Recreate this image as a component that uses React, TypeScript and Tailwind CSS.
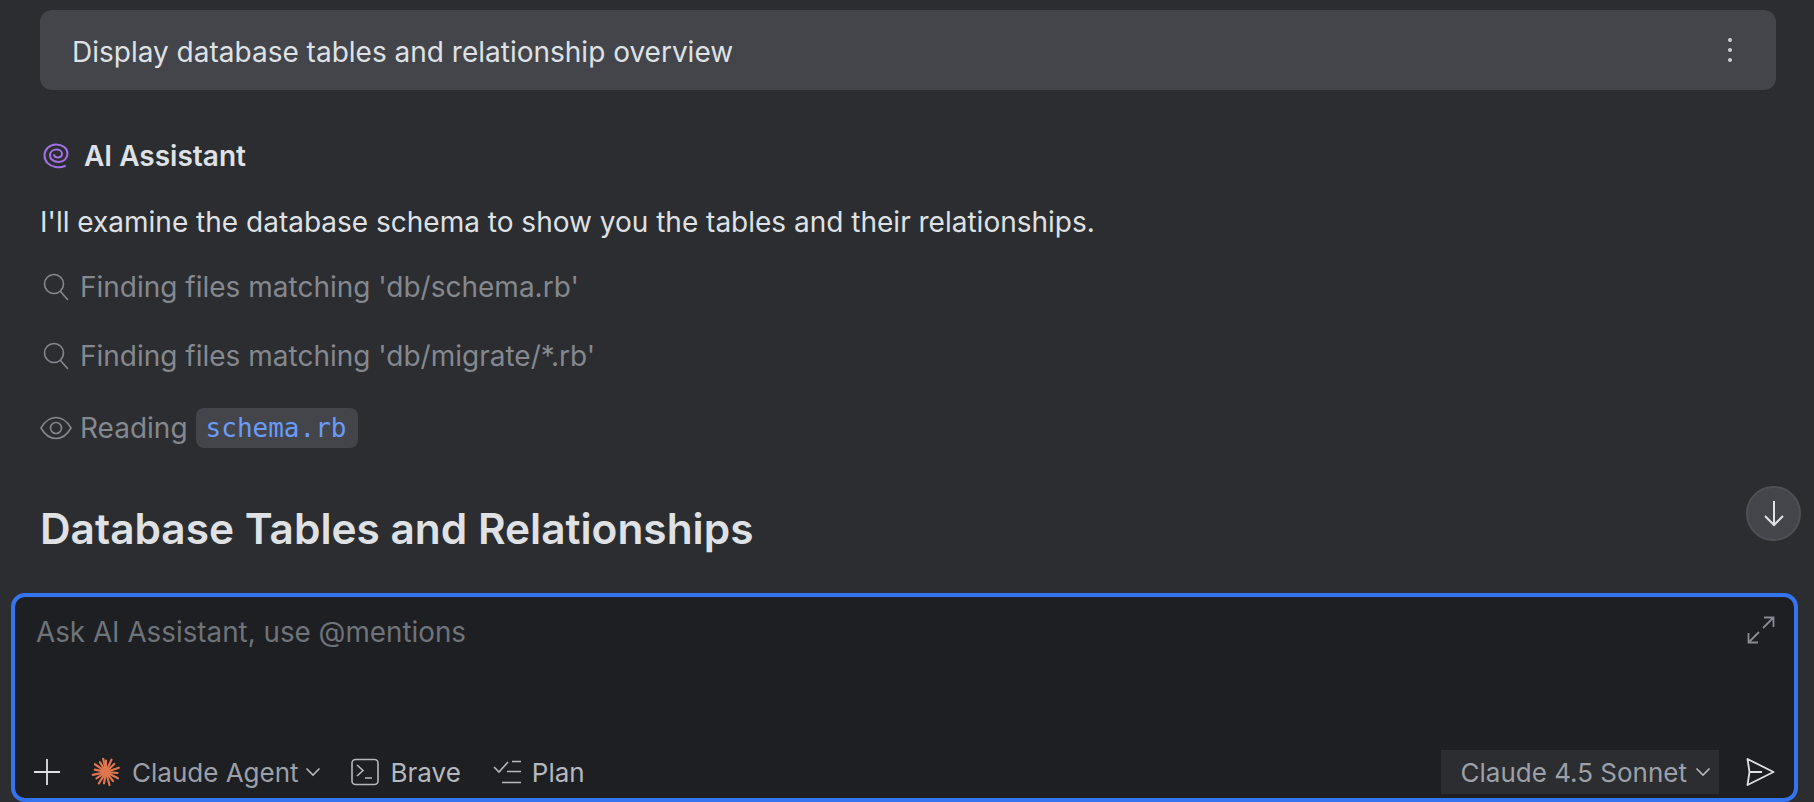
const font = "font-['Inter',sans-serif]"

function Spiral() {
  return (
    <svg width="26" height="26" viewBox="0 0 26 26" fill="none" stroke="#a571e6" strokeWidth="2" strokeLinecap="round">
      <path d="M22 23c-3 1.300-6.500 1.500-9.500 1C6 23 1.500 18.500 1.500 12.500 1.500 6.500 6.500 1.500 13 1.500c6.500 0 11.500 3.500 11.500 9 0 5-3.800 8.500-9 8.500C11 19 7 16.300 7 12.500 7 9 9.800 6.500 13.500 6.500c3 0 5.500 1.700 5.500 4.300 0 2.400-2 3.700-4.200 3.700-1.800 0-3.300-.9-3.800-2.500" />
    </svg>
  )
}

function Search() {
  return (
    <svg width="26" height="28" viewBox="0 0 26 28" fill="none" stroke="#85888f" strokeWidth="1.600" strokeLinecap="round">
      <circle cx="11" cy="11" r="9.500" />
      <path d="M17.500 18.500l7 8" />
    </svg>
  )
}

function Eye() {
  return (
    <svg width="32" height="24" viewBox="0 0 32 24" fill="none" stroke="#85888f" strokeWidth="1.600">
      <path d="M1 12C5 5 10 1.500 16 1.500S27 5 31 12c-4 7-9 10.500-15 10.500S5 19 1 12z" strokeLinejoin="round" />
      <circle cx="16" cy="12" r="5.500" />
    </svg>
  )
}

function Chevron({ color }: { color: string }) {
  return (
    <svg width="16" height="10" viewBox="0 0 16 10" fill="none" stroke={color} strokeWidth="1.600">
      <path d="M1.500 1.500L8 8l6.500-6.500" />
    </svg>
  )
}

function Burst() {
  const rays = [0, 24, 46, 72, 95, 118, 142, 165, 190, 212, 236, 258, 282, 305, 328, 348]
  return (
    <svg width="30" height="30" viewBox="0 0 30 30" stroke="#e0774f" strokeWidth="2.200" strokeLinecap="round">
      {rays.map((r, i) => (
        <line key={r} x1="15" y1="14" x2="15" y2={i % 2 ? 1.500 : 3.500} transform={`rotate(${r} 15 15)`} />
      ))}
    </svg>
  )
}

export default function App() {
  return (
    <div className={`${font} flex h-[802px] w-[1814px] flex-col overflow-hidden bg-[#2b2d30] text-[#dfe1e5]`}>
      <main className="relative flex min-h-0 flex-1 flex-col pl-10 pr-[38px] pt-[10px]">
        <div className="flex h-20 shrink-0 items-center justify-between rounded-xl bg-[#43454a] pl-8 pr-[44px]">
          <span className="pt-[3px] text-[28px]">Display database tables and relationship overview</span>
          <div className="flex flex-col gap-[6px]">
            <span className="size-1 rounded-full bg-[#ced0d6]" />
            <span className="size-1 rounded-full bg-[#ced0d6]" />
            <span className="size-1 rounded-full bg-[#ced0d6]" />
          </div>
        </div>

        <div className="mt-[48px] flex h-9 items-center gap-[15px] pl-[3px]">
          <Spiral />
          <span className="text-[28px] font-semibold">AI Assistant</span>
        </div>

        <p className="mt-[30px] h-9 text-[28px] leading-9">
          I'll examine the database schema to show you the tables and their relationships.
        </p>

        <div className="mt-[29px] flex h-9 items-center gap-[11px] pl-[3px] text-[28px] text-[#85888f]">
          <Search />
          <span>Finding files matching 'db/schema.rb'</span>
        </div>
        <div className="mt-[33px] flex h-9 items-center gap-[11px] pl-[3px] text-[28px] text-[#85888f]">
          <Search />
          <span>Finding files matching 'db/migrate/*.rb'</span>
        </div>
        <div className="mt-[34px] flex h-10 items-center gap-[8px] text-[28px] text-[#85888f]">
          <Eye />
          <span>Reading</span>
          <span className="flex h-10 items-center rounded-lg bg-[#43454a] pl-[10px] pr-[12px] font-['DejaVu_Sans_Mono',monospace] text-[26px] text-[#6a9bfa]">
            schema.rb
          </span>
        </div>

        <h1 className="mt-[56px] text-[42.4px] font-semibold leading-[50px] text-[#dfe1e5]">
          Database Tables and Relationships
        </h1>

        <button className="absolute left-[1746px] top-[486px] flex size-[55px] items-center justify-center rounded-full border-2 border-[#4e5055] bg-[#43454a]">
          <svg width="20" height="26" viewBox="0 0 20 26" fill="none" stroke="#dfe1e5" strokeWidth="2">
            <path d="M10 0v24M1 15l9 9 9-9" />
          </svg>
        </button>
      </main>

      <section className="ml-[11px] mr-[16px] flex h-[209px] shrink-0 flex-col rounded-[14px] border-4 border-[#3574f0] bg-[#1e1f22] pb-[4px] pl-[21px] pr-[19px] pt-[17px]">
        <div className="flex flex-1 items-start justify-between">
          <span className="text-[27.8px] leading-9 text-[#6f737a]">Ask AI Assistant, use @mentions</span>
          <svg className="mt-[2px]" width="28" height="28" viewBox="0 0 28 28" fill="none" stroke="#868a91" strokeWidth="1.800">
            <path d="M16 12L26.500 1.500M17 1.500h9.500V11M12 16L1.500 26.500M1.500 17v9.500H11" />
          </svg>
        </div>

        <div className="flex h-11 items-center text-[26px] text-[#b4b8bf]">
          <svg className="-ml-[3px]" width="28" height="28" viewBox="0 0 28 28" stroke="#dfe1e5" strokeWidth="1.800">
            <path d="M14 1v26M1 14h26" />
          </svg>
          <div className="ml-[30px] flex items-center gap-[6px]">
            <Burst />
            <span className="ml-[5px] text-[#9da0a8]">Claude Agent</span>
            <Chevron color="#b4b8bf" />
          </div>
          <div className="ml-[30px] flex items-center gap-[12px]">
            <svg width="28" height="28" viewBox="0 0 28 28" fill="none" stroke="#b4b8bf" strokeWidth="1.600">
              <rect x="1" y="1.500" width="26" height="25" rx="3.500" />
              <path d="M6 7l6 5.500-6 5.500M14 20h7" />
            </svg>
            <span>Brave</span>
          </div>
          <div className="ml-[32px] flex items-center gap-[9px]">
            <svg width="30" height="26" viewBox="0 0 30 26" fill="none" stroke="#b4b8bf" strokeWidth="1.600">
              <path d="M1 8l5 5 9-10M19 2.500h9M14 12.500h14M9 23.500h19" />
            </svg>
            <span>Plan</span>
          </div>

          <div className="ml-auto flex h-11 items-center gap-[8px] bg-[#2b2d30] pl-[20px] pr-[8px] text-[#9da0a8]">
            <span>Claude 4.5 Sonnet</span>
            <Chevron color="#b4b8bf" />
          </div>
          <svg className="ml-[26px]" width="30" height="30" viewBox="0 0 30 30" fill="none" stroke="#dfe1e5" strokeWidth="1.800" strokeLinejoin="round">
            <path d="M2.500 2l26 13-26 13 2-13-2-13zM4.500 15H17" />
          </svg>
        </div>
      </section>
    </div>
  )
}
